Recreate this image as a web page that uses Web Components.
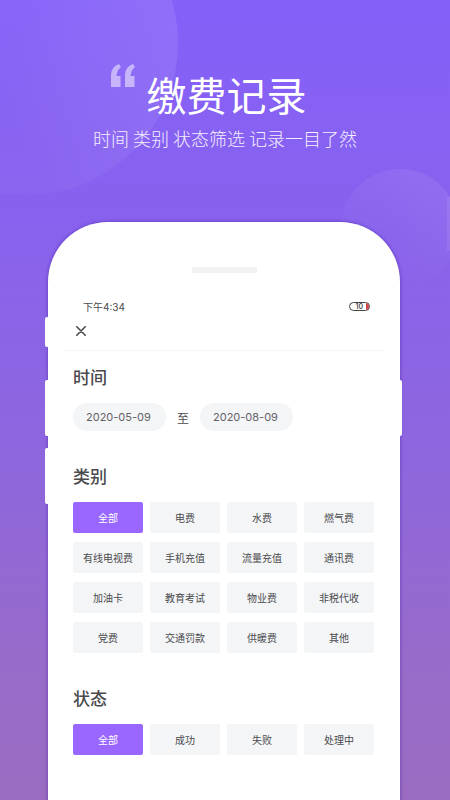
<!DOCTYPE html>
<html lang="zh-CN">
<head>
<meta charset="utf-8">
<meta name="viewport" content="width=device-width, initial-scale=1">
<title>缴费记录</title>
<style>
  body {
    margin: 0;
    font-family: Inter, "Noto Sans CJK SC", sans-serif;
    color: #4a4a4d;
  }
</style>
</head>
<body>
<promo-page>
  <promo-title slot="title">
    缴费记录
    <span slot="subtitle">时间 类别 状态筛选 记录一目了然</span>
  </promo-title>
  <phone-frame>
    <status-bar time="下午4:34" battery="10"></status-bar>
    <filter-section label="时间">
      <date-range from="2020-05-09" to="2020-08-09"></date-range>
    </filter-section>
    <filter-section label="类别">
      <chip-group items="全部,电费,水费,燃气费,有线电视费,手机充值,流量充值,通讯费,加油卡,教育考试,物业费,非税代收,党费,交通罚款,供暖费,其他"></chip-group>
    </filter-section>
    <filter-section label="状态">
      <chip-group items="全部,成功,失败,处理中"></chip-group>
    </filter-section>
  </phone-frame>
</promo-page>

<script>
const attach = (el, html) => {
  const template = document.createElement('template');
  template.innerHTML = html;
  const root = el.attachShadow({ mode: 'open' });
  root.appendChild(template.content.cloneNode(true));
  return root;
};

class PromoPage extends HTMLElement {
  constructor() {
    super();
    attach(this, `
      <style>
        :host {
          display: flex;
          flex-direction: column;
          position: relative;
          overflow: hidden;
          min-height: 100vh;
          background: linear-gradient(#8560f9 0%, #8862ed 27%, #8e66de 55%, #976bca 80%, #9b6cc0 100%);
        }

        .circle {
          position: absolute;
          border-radius: 50%;
        }

        .big {
          left: -126px;
          top: -109px;
          width: 304px;
          height: 304px;
          background: linear-gradient(70deg, rgba(255,255,255,0.02) 40%, rgba(255,255,255,0.1) 95%);
        }

        .small {
          right: -9px;
          top: 169px;
          width: 118px;
          height: 118px;
          background: linear-gradient(30deg, rgba(255,255,255,0) 25%, rgba(255,255,255,0.08) 90%);
        }

        .edge {
          position: absolute;
          right: 0;
          top: 197px;
          width: 3px;
          height: 54px;
          background: rgba(255,255,255,0.08);
        }

        header {
          position: relative;
          padding-top: 64px;
        }

        main {
          position: relative;
          display: flex;
          flex: 1;
          margin: 70px 50px 0 48px;
        }
      </style>
      <div class="circle big"></div>
      <div class="circle small"></div>
      <div class="edge"></div>
      <header><slot name="title"></slot></header>
      <main><slot></slot></main>
    `);
  }
}

class PromoTitle extends HTMLElement {
  constructor() {
    super();
    attach(this, `
      <style>
        :host {
          display: block;
          color: #fff;
          text-align: center;
          font-family: "Noto Sans CJK SC", sans-serif;
        }

        .row {
          display: grid;
          grid-template-columns: 1fr auto 1fr;
          column-gap: 12px;
          padding-left: 3px;
        }

        svg {
          justify-self: end;
          width: 24px;
          height: 24px;
        }

        h1 {
          margin: 0;
          font-size: 40px;
          line-height: 60px;
          font-weight: 400;
        }

        p {
          margin: 0;
          font-size: 18px;
          line-height: 28px;
          font-weight: 300;
          opacity: 0.9;
        }
      </style>
      <div class="row">
        <svg viewBox="0 0 24 24" fill="#fff" fill-opacity="0.5" aria-hidden="true">
          <path d="M8 0 L10 3 Q6 6 5.500 12 H9.500 V23 H0 V11 Q0 3 8 0 Z"/>
          <path d="M22 0 L24 3 Q20 6 19.500 12 H23.500 V23 H14 V11 Q14 3 22 0 Z"/>
        </svg>
        <h1><slot></slot></h1>
      </div>
      <p><slot name="subtitle"></slot></p>
    `);
  }
}

class PhoneFrame extends HTMLElement {
  constructor() {
    super();
    attach(this, `
      <style>
        :host {
          display: block;
          flex: 1;
          position: relative;
          box-sizing: border-box;
          padding: 45px 16px 45px;
          border-radius: 60px 60px 0 0;
          background: #fff;
          box-shadow: 0 0 3px 1px rgba(80,40,170,0.45);
        }

        .key {
          position: absolute;
          left: -3px;
          width: 4px;
          height: 56px;
          border-radius: 2px 0 0 2px;
          background: #fff;
        }

        .mute { top: 95px; height: 30px; }
        .up { top: 158px; }
        .down { top: 226px; }

        .power {
          left: auto;
          right: -2px;
          top: 158px;
          border-radius: 0 2px 2px 0;
        }

        .speaker {
          width: 65px;
          height: 6px;
          margin: 0 auto 25px;
          background: #f2f2f2;
        }
      </style>
      <div class="key mute"></div>
      <div class="key up"></div>
      <div class="key down"></div>
      <div class="key power"></div>
      <div class="speaker"></div>
      <slot></slot>
    `);
  }
}

class StatusBar extends HTMLElement {
  constructor() {
    super();
    this._root = attach(this, `
      <style>
        :host {
          display: block;
          border-bottom: 1px solid #f4f4f5;
        }

        .bar {
          display: flex;
          align-items: center;
          justify-content: space-between;
          height: 16px;
          padding: 0 14px 0 19px;
          font-size: 10px;
        }

        .battery {
          display: flex;
          align-items: center;
          justify-content: flex-end;
          gap: 3px;
          box-sizing: border-box;
          width: 21px;
          height: 9px;
          border: 1px solid #444;
          border-radius: 5px;
          overflow: hidden;
          font-size: 7px;
          line-height: 7px;
          font-weight: 600;
        }

        .battery::after {
          content: "";
          width: 3px;
          height: 7px;
          background: #cf4650;
        }

        button {
          display: block;
          margin: 9px 0 11px 9px;
          padding: 3px;
          border: 0;
          background: none;
          color: inherit;
          cursor: pointer;
        }

        svg {
          display: block;
          width: 10px;
          height: 10px;
        }
      </style>
      <div class="bar">
        <span class="time"></span>
        <span class="battery"><span class="level"></span></span>
      </div>
      <button aria-label="关闭">
        <svg viewBox="0 0 10 10" stroke="currentColor" stroke-width="1.600" stroke-linecap="round">
          <path d="M0.800 0.800 L9.200 9.200 M9.200 0.800 L0.800 9.200"/>
        </svg>
      </button>
    `);
  }

  connectedCallback() {
    this._root.querySelector('.time').textContent = this.getAttribute('time');
    this._root.querySelector('.level').textContent = this.getAttribute('battery');
  }
}

class FilterSection extends HTMLElement {
  constructor() {
    super();
    this._root = attach(this, `
      <style>
        :host {
          display: block;
          padding: 14px 10px 19px 9px;
        }

        h2 {
          margin: 0 0 12px;
          font-size: 17px;
          line-height: 26px;
          font-weight: 500;
        }
      </style>
      <h2></h2>
      <slot></slot>
    `);
  }

  connectedCallback() {
    this._root.querySelector('h2').textContent = this.getAttribute('label');
  }
}

class DateRange extends HTMLElement {
  constructor() {
    super();
    this._root = attach(this, `
      <style>
        :host {
          display: flex;
          align-items: center;
          gap: 11px;
          font-size: 12px;
        }

        input {
          box-sizing: border-box;
          width: 93px;
          height: 28px;
          padding: 0 13px;
          border: 0;
          border-radius: 14px;
          outline: none;
          background: #f4f5f7;
          color: #626266;
          font-family: inherit;
          font-size: 11px;
        }
      </style>
      <input class="from" aria-label="开始日期">
      <span>至</span>
      <input class="to" aria-label="结束日期">
    `);
  }

  connectedCallback() {
    this._root.querySelector('.from').value = this.getAttribute('from');
    this._root.querySelector('.to').value = this.getAttribute('to');
  }
}

class ChipGroup extends HTMLElement {
  constructor() {
    super();
    this._root = attach(this, `
      <style>
        :host {
          display: grid;
          grid-template-columns: repeat(4, 1fr);
          gap: 9px 7px;
        }

        button {
          height: 31px;
          padding: 0;
          border: 0;
          border-radius: 2px;
          background: #f4f5f7;
          color: #4a4a4d;
          font-family: inherit;
          font-size: 10px;
          white-space: nowrap;
          cursor: pointer;
        }

        button[aria-pressed="true"] {
          background: #9966ff;
          color: #fff;
        }
      </style>
    `);
  }

  connectedCallback() {
    this.getAttribute('items').split(',').forEach((text, i) => {
      const button = document.createElement('button');
      button.textContent = text;
      button.setAttribute('aria-pressed', i === 0);
      button.addEventListener('click', () => this.select(button));
      this._root.appendChild(button);
    });
  }

  // only one chip in a group can be active
  select(active) {
    this._root.querySelectorAll('button').forEach(button => {
      button.setAttribute('aria-pressed', button === active);
    });
  }
}

customElements.define('promo-page', PromoPage);
customElements.define('promo-title', PromoTitle);
customElements.define('phone-frame', PhoneFrame);
customElements.define('status-bar', StatusBar);
customElements.define('filter-section', FilterSection);
customElements.define('date-range', DateRange);
customElements.define('chip-group', ChipGroup);
</script>
</body>
</html>
